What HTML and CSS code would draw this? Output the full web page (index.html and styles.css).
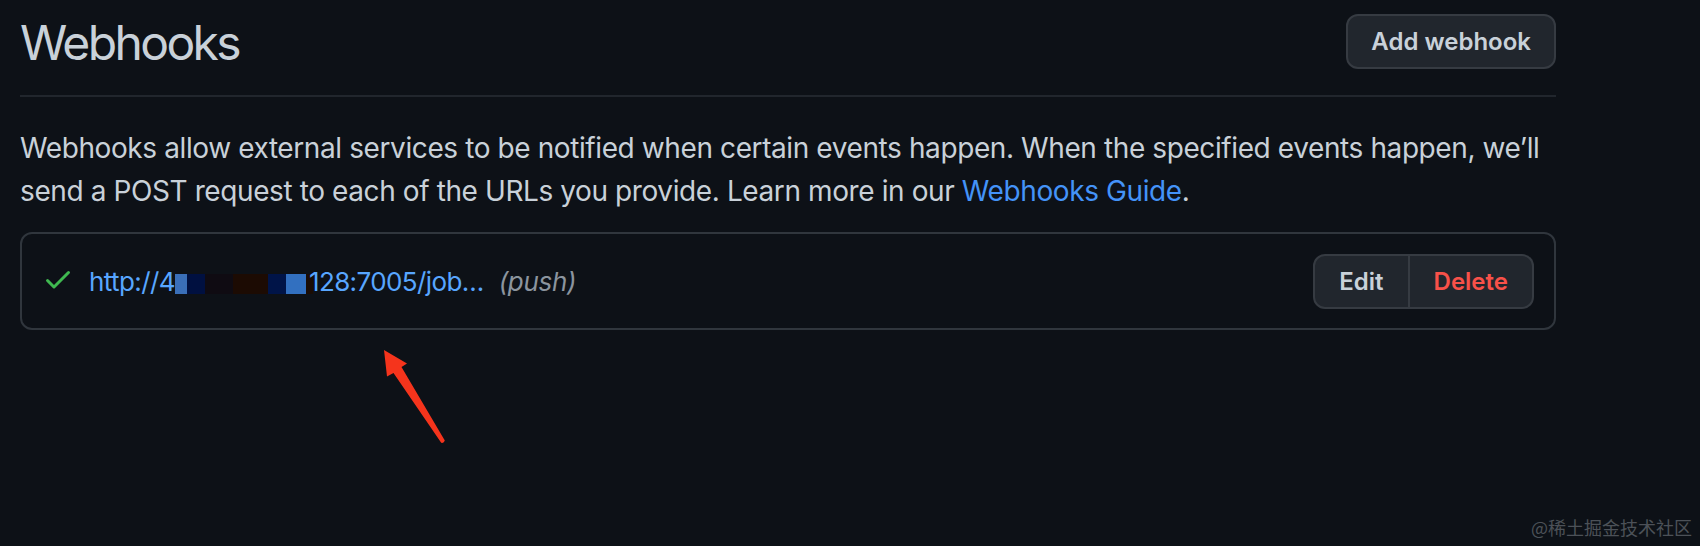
FILE: index.html
```html
<!DOCTYPE html>
<html lang="en">
<head>
<meta charset="utf-8">
<title>Webhooks</title>
<link rel="stylesheet" href="styles.css">
</head>
<body>
<main class="page">
  <header class="subhead">
    <h2 class="subhead-title">Webhooks</h2>
    <button class="btn btn-add">Add webhook</button>
  </header>
  <p class="intro">Webhooks allow external services to be notified when certain events happen. When the specified events happen, we’ll send a POST request to each of the URLs you provide. Learn more in our <a class="link" href="#">Webhooks Guide</a>.</p>
  <div class="box">
    <div class="hook-row">
      <svg class="check" viewBox="0 0 16 16" width="32" height="32" aria-hidden="true"><path fill="#3fb950" d="M13.78 4.22a.75.75 0 0 1 0 1.06l-7.25 7.25a.75.75 0 0 1-1.06 0L2.22 9.28a.75.75 0 0 1 1.06-1.06L6 10.94l6.72-6.72a.75.75 0 0 1 1.06 0Z"/></svg>
      <a class="hook-url" href="#">http://4<span class="mosaic"><span class="m m1"></span><span class="m m2"></span><span class="m m3"></span><span class="m m4"></span><span class="m m5"></span><span class="m m6"></span><span class="m m7"></span></span>128:7005/job…</a>
      <span class="hook-events">(push)</span>
      <div class="btn-group">
        <button class="btn btn-left">Edit</button>
        <button class="btn btn-right btn-danger">Delete</button>
      </div>
    </div>
  </div>
</main>
<svg class="annot-arrow" viewBox="0 0 90 110" width="90" height="110" aria-hidden="true"><path fill="#f5341c" d="M14 10 L37 23.5 L31.5 27 L74.8 100.5 Q74 103.5 71.2 102.8 L23.5 33 L17 36.5 Z"/></svg>
<div class="watermark">@稀土掘金技术社区</div>
</body>
</html>
```
FILE: styles.css
```css
html, body {
  margin: 0;
  padding: 0;
  background: #0d1117;
}
body {
  font-family: Inter, "Noto Sans", "Liberation Sans", sans-serif;
  color: #c9d1d9;
  width: 1700px;
  height: 546px;
  position: relative;
  overflow: hidden;
}
.page {
  width: 1536px;
  margin-left: 20px;
  padding-top: 14px;
}
.subhead {
  display: flex;
  justify-content: space-between;
  align-items: flex-start;
  padding-bottom: 25px;
  border-bottom: 2px solid #21262d;
}
.subhead-title {
  margin: 1px 0 0;
  font-size: 48px;
  font-weight: 400;
  line-height: 55px;
  letter-spacing: -2.6px;
  color: #c9d1d9;
}
.btn {
  box-sizing: border-box;
  height: 55px;
  padding: 0 24px;
  font-family: Inter, "Liberation Sans", sans-serif;
  font-size: 24px;
  font-weight: 600;
  line-height: 51px;
  color: #c9d1d9;
  background: #21262d;
  border: 2px solid #363b42;
  border-radius: 12px;
  cursor: pointer;
}
.btn-add {
  padding: 0 23px;
}
.intro {
  margin: 30px 0 19px;
  font-size: 28px;
  line-height: 43px;
  letter-spacing: -0.4px;
}
.link {
  color: #4493f8;
  text-decoration: none;
}
.box {
  border: 2px solid #30363d;
  border-radius: 12px;
  padding: 20px 20px 19px;
}
.hook-row {
  display: flex;
  align-items: center;
}
.check {
  flex: none;
  margin-right: 15px;
  margin-bottom: 5px;
}
.hook-url {
  font-size: 26px;
  line-height: 40px;
  letter-spacing: -0.6px;
  color: #58a6ff;
  text-decoration: none;
  white-space: nowrap;
}
.mosaic {
  display: inline-flex;
  vertical-align: -3px;
  height: 20px;
  margin: 0 -4px 0 0;
}
.m { display: block; height: 20px; }
.m1 { width: 12px; background: #3a6fb8; }
.m2 { width: 18px; background: #001040; }
.m3 { width: 28px; background: #0f0b12; }
.m4 { width: 35px; background: #1c0b03; }
.m5 { width: 18px; background: #001448; }
.m6 { width: 20px; background: #3270c0; }
.m7 { width: 7px; background: #1a0c05; }
.hook-events {
  margin-left: 15px;
  font-size: 26px;
  letter-spacing: -0.3px;
  font-style: italic;
  color: #8b949e;
}
.btn-group {
  margin-left: auto;
  display: flex;
}
.btn-left {
  border-radius: 12px 0 0 12px;
}
.btn-right {
  border-left: none;
  border-radius: 0 12px 12px 0;
}
.btn-danger {
  color: #f85149;
}
.annot-arrow {
  position: absolute;
  left: 370px;
  top: 340px;
}
.watermark {
  position: absolute;
  right: 8px;
  top: 515px;
  font-family: "Noto Sans CJK SC", sans-serif;
  font-size: 18px;
  line-height: 24px;
  color: #4c5158;
}
```
